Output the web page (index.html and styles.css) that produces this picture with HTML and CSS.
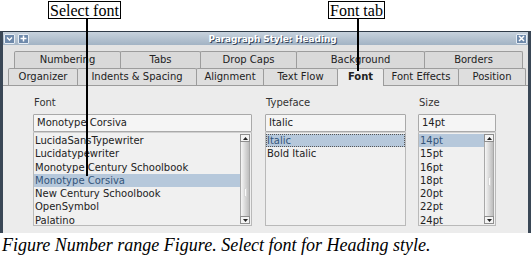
FILE: index.html
```html
<!DOCTYPE html>
<html lang="en">
<head>
  <meta charset="UTF-8" />
  <title>Paragraph Style: Heading</title>
  <link rel="stylesheet" href="styles.css">
</head>
<body>
  <div class="figure">
    <div class="callout callout-select">Select font</div>
    <div class="callout callout-tab">Font tab</div>
    <div class="leader leader-select"></div>
    <div class="leader leader-tab"></div>

    <div class="window">
      <div class="titlebar">
        <div class="tb-group">
          <span class="tb-btn">
            <svg width="7" height="6" viewBox="0 0 7 6"><path d="M1 1.5 L3.5 4 L6 1.5" fill="none" stroke="#fff" stroke-width="1.4"/></svg>
          </span>
          <span class="tb-btn">
            <svg width="7" height="7" viewBox="0 0 7 7"><path d="M3.5 0.5 V6.5 M0.5 3.5 H6.5" stroke="#fff" stroke-width="1.5"/></svg>
          </span>
        </div>
        <div class="tb-title">Paragraph Style: Heading</div>
        <div class="tb-group">
          <span class="tb-btn">
            <svg width="7" height="7" viewBox="0 0 7 7"><path d="M1 1 L6 6 M6 1 L1 6" stroke="#fff" stroke-width="1.5"/></svg>
          </span>
        </div>
      </div>

      <div class="tabs">
        <div class="tab-row row-back">
          <div class="tab w106">Numbering</div>
          <div class="tab w80">Tabs</div>
          <div class="tab w96">Drop Caps</div>
          <div class="tab w128">Background</div>
          <div class="tab w98">Borders</div>
        </div>
        <div class="tab-row row-front">
          <div class="tab w69">Organizer</div>
          <div class="tab w119">Indents &amp; Spacing</div>
          <div class="tab w67">Alignment</div>
          <div class="tab w74">Text Flow</div>
          <div class="tab w46 active">Font</div>
          <div class="tab w75">Font Effects</div>
          <div class="tab w67">Position</div>
        </div>
      </div>

      <div class="page">
        <div class="field col-font">
          <div class="label">Font</div>
          <div class="input">Monotype Corsiva</div>
          <div class="list">
            <div class="items">
              <div class="item">LucidaSansTypewriter</div>
              <div class="item">Lucidatypewriter</div>
              <div class="item">Monotype Century Schoolbook</div>
              <div class="item selected">Monotype Corsiva</div>
              <div class="item">New Century Schoolbook</div>
              <div class="item">OpenSymbol</div>
              <div class="item">Palatino</div>
            </div>
            <div class="scrollbar">
              <div class="sb-btn"><svg width="5" height="3" viewBox="0 0 5 3"><path d="M0 3 L2.5 0 L5 3 Z" fill="#222"/></svg></div>
              <div class="sb-track"><span class="grip grip-font"></span></div>
              <div class="sb-btn"><svg width="5" height="3" viewBox="0 0 5 3"><path d="M0 0 L2.5 3 L5 0 Z" fill="#222"/></svg></div>
            </div>
          </div>
        </div>

        <div class="field col-typeface">
          <div class="label">Typeface</div>
          <div class="input">Italic</div>
          <div class="list">
            <div class="items">
              <div class="item selected focused">Italic</div>
              <div class="item">Bold Italic</div>
            </div>
          </div>
        </div>

        <div class="field col-size">
          <div class="label">Size</div>
          <div class="input">14pt</div>
          <div class="list">
            <div class="items">
              <div class="item selected">14pt</div>
              <div class="item">15pt</div>
              <div class="item">16pt</div>
              <div class="item">18pt</div>
              <div class="item">20pt</div>
              <div class="item">22pt</div>
              <div class="item">24pt</div>
            </div>
            <div class="scrollbar">
              <div class="sb-btn"><svg width="5" height="3" viewBox="0 0 5 3"><path d="M0 3 L2.5 0 L5 3 Z" fill="#222"/></svg></div>
              <div class="sb-track"><span class="grip grip-size"></span></div>
              <div class="sb-btn"><svg width="5" height="3" viewBox="0 0 5 3"><path d="M0 0 L2.5 3 L5 0 Z" fill="#222"/></svg></div>
            </div>
          </div>
        </div>
      </div>
    </div>

    <p class="caption">Figure Number range Figure. Select font for Heading style.</p>
  </div>
</body>
</html>
```

FILE: styles.css
```css
* { box-sizing: border-box; margin: 0; padding: 0; }
body {
  font-family: "DejaVu Sans", sans-serif;
  background-color: #fff;
  color: #222;
}
.figure {
  position: relative;
  width: 531px;
  padding-top: 31px;
}

/* callouts drawn over the screenshot */
.callout {
  position: absolute;
  top: 1px;
  height: 18px;
  padding: 0 1px;
  border: 1px solid #000;
  background-color: #fff;
  font: 16px/17px "Liberation Serif", serif;
  color: #000;
  z-index: 2;
}
.callout-select { left: 48px; }
.callout-tab { left: 328px; }
.leader {
  position: absolute;
  top: 19px;
  width: 2px;
  background-color: #000;
  z-index: 2;
}
.leader-select { left: 86px; height: 157px; }
.leader-tab { left: 357px; height: 52px; }

/* window */
.window {
  width: 531px;
  border-top: 1px solid #2f3b48;
  border-left: 3px solid #3a4756;
  border-right: 3px solid #3a4756;
  background-color: #e3e3e3;
}
.titlebar {
  display: flex;
  align-items: center;
  height: 13px;
  padding: 0 1px;
  background: linear-gradient(#c7d2dd, #a2b3c4);
}
.tb-group {
  display: flex;
  gap: 3px;
}
.tb-btn {
  display: flex;
  align-items: center;
  justify-content: center;
  width: 11px;
  height: 10px;
  background-color: #6f8aab;
  border: 1px solid #e6edf4;
  border-radius: 1px;
}
.tb-title {
  flex: 1;
  text-align: center;
  font-size: 9px;
  font-weight: bold;
  color: #fff;
  text-shadow: 1px 1px 0 #34455a;
  letter-spacing: -0.1px;
}

/* tabs */
.tabs {
  padding-top: 6px;
}
.tab-row {
  display: flex;
  height: 17px;
}
.row-back { margin-left: 11px; }
.row-front { margin-left: 5px; }
.tab {
  height: 17px;
  margin-right: -1px;
  border: 1px solid #9c9c9c;
  border-bottom: none;
  border-radius: 2px 2px 0 0;
  background-color: #dedede;
  text-align: center;
  font-size: 10px;
  line-height: 16px;
  color: #222;
}
.row-back .tab { background-color: #d9d9d9; }
.tab.active {
  position: relative;
  height: 18px;
  background-color: #ececec;
  font-weight: bold;
  z-index: 1;
}
.w46 { width: 47px; }
.w67 { width: 68px; }
.w69 { width: 70px; }
.w74 { width: 75px; }
.w75 { width: 76px; }
.w80 { width: 81px; }
.w96 { width: 97px; }
.w98 { width: 99px; }
.w106 { width: 107px; }
.w119 { width: 120px; }
.w128 { width: 129px; }

/* font page */
.page {
  display: flex;
  gap: 13px;
  padding: 11px 0 7px 30px;
  border-top: 1px solid #9c9c9c;
  background-color: #ececec;
}
.field { display: flex; flex-direction: column; }
.col-font { width: 219px; }
.col-typeface { width: 141px; margin-right: -1px; }
.col-size { width: 78px; }
.label {
  height: 12px;
  margin-bottom: 5px;
  padding-left: 1px;
  font-size: 10px;
  line-height: 12px;
  color: #333;
}
.input {
  height: 18px;
  padding-left: 3px;
  border: 1px solid #a9a9a9;
  border-radius: 1px;
  background-color: #f5f5f5;
  font-size: 10px;
  line-height: 16px;
}
.list {
  display: flex;
  height: 94px;
  border: 1px solid #b9b9b9;
  border-top-color: #d0d0d0;
  background-color: #f0f0f0;
}
.items {
  flex: 1;
  padding-top: 1px;
}
.item {
  height: 13.3px;
  padding-left: 1px;
  font-size: 10px;
  line-height: 13px;
  white-space: nowrap;
}
.item.selected {
  background-color: #b6c8db;
  color: #34557a;
}
.item.focused {
  border: 1px dotted #555;
  line-height: 11px;
  padding-left: 0;
}
.scrollbar {
  display: flex;
  flex-direction: column;
  width: 10px;
  margin: 1px 1px 1px 0;
}
.sb-btn {
  display: flex;
  align-items: center;
  justify-content: center;
  height: 8px;
  border: 1px solid #8e8e8e;
  background-color: #f4f4f4;
}
.sb-track {
  position: relative;
  flex: 1;
  border-left: 1px solid #a8a8a8;
  border-right: 1px solid #a8a8a8;
  background: linear-gradient(to right, #f6f6f6, #bdbdbd);
}
.grip {
  position: absolute;
  left: 3px;
  width: 3px;
  height: 9px;
  border: 1px solid #d6d6d6;
  background-color: #fafafa;
}
.grip-font { top: 46px; }
.grip-size { top: 35px; }

.caption {
  margin: 2px 0 0 2px;
  font: italic 18px/20px "Liberation Serif", serif;
  color: #000;
}
```
